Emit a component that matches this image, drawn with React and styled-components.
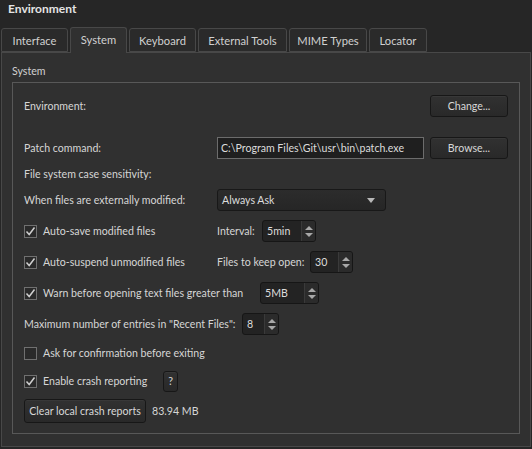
import React from "react";
import styled, { createGlobalStyle } from "styled-components";

const Global = createGlobalStyle`
  html, body { margin: 0; padding: 0; background: #262626; }
  body {
    font-family: Lato, "Open Sans", sans-serif;
    font-size: 10.6px;
    color: #d6d6d6;
    width: 532px;
    height: 449px;
    overflow: hidden;
  }
  * { box-sizing: border-box; }
`;

const Page = styled.div`
  display: flex;
  flex-direction: column;
  height: 449px;
`;

const Title = styled.div`
  height: 26px;
  padding: 1px 0 0 8px;
  font-weight: bold;
  font-size: 12px;
  color: #e4e4e4;
`;

const TabBar = styled.div`
  display: flex;
  align-items: flex-end;
  gap: 2px;
  padding-left: 1px;
  height: 26px;
  position: relative;
  z-index: 1;
`;

const Tab = styled.div`
  height: ${(p) => (p.$active ? 26 : 24)}px;
  width: ${(p) => p.$w}px;
  display: flex;
  align-items: center;
  justify-content: center;
  padding-bottom: ${(p) => (p.$active ? 3 : 0)}px;
  border: 1px solid #484848;
  border-bottom: ${(p) => (p.$active ? "none" : "1px solid #484848")};
  border-radius: 3px 3px 0 0;
  background: ${(p) => (p.$active ? "#303030" : "#2a2a2a")};
  color: #d0d0d0;
  font-size: 11.2px;
  margin-bottom: ${(p) => (p.$active ? -1 : 0)}px;
`;

const Pane = styled.div`
  flex: 1;
  margin: 0 1px 2px 1px;
  background: #303030;
  border: 1px solid #484848;
  padding: 10px 10px 12px 10px;
  display: flex;
  flex-direction: column;
`;

const GroupTitle = styled.div`
  height: 19px;
  padding-top: 2px;
  color: #d0d0d0;
`;

const Group = styled.div`
  flex: 1;
  border: 1px solid #585858;
  padding: 12px 11px 0 11px;
  display: flex;
  flex-direction: column;
`;

const Row = styled.div`
  display: flex;
  align-items: center;
  height: ${(p) => p.$h || 22}px;
  margin-top: ${(p) => p.$mt || 0}px;
`;

const Label = styled.span`
  width: ${(p) => (p.$w ? `${p.$w}px` : "auto")};
  flex: none;
  white-space: nowrap;
  margin-left: ${(p) => p.$ml || 0}px;
  margin-right: ${(p) => p.$mr || 0}px;
`;

const Button = styled.div`
  width: ${(p) => p.$w}px;
  height: ${(p) => p.$h || 22}px;
  margin-left: ${(p) => (p.$right ? "auto" : `${p.$ml || 0}px`)};
  display: flex;
  align-items: center;
  justify-content: center;
  background: linear-gradient(#313131, #292929);
  border: 1px solid #171717;
  border-radius: 3px;
  box-shadow: inset 0 1px 0 #383838;
  color: #d8d8d8;
  white-space: nowrap;
`;

const TextInput = styled.div`
  width: 207px;
  height: 22px;
  display: flex;
  align-items: center;
  padding-left: 3px;
  background: #1f1f1f;
  border: 1px solid #6c6c6c;
  color: #dcdcdc;
  white-space: nowrap;
  overflow: hidden;
`;

const Combo = styled.div`
  width: 169px;
  height: 22px;
  display: flex;
  align-items: center;
  justify-content: space-between;
  padding: 0 10px 0 4px;
  background: linear-gradient(#2c2c2c, #262626);
  border: 1px solid #181818;
  border-radius: 3px;
  color: #dcdcdc;
`;

const Arrow = styled.span`
  width: 0;
  height: 0;
  border-left: 4px solid transparent;
  border-right: 4px solid transparent;
  border-top: 5px solid #b8b8b8;
`;

const Spin = styled.div`
  width: ${(p) => p.$w}px;
  height: 22px;
  display: flex;
  background: #232323;
  border: 1px solid #161616;
  border-radius: 3px;
  overflow: hidden;
`;

const SpinText = styled.div`
  flex: 1;
  display: flex;
  align-items: center;
  padding-left: 4px;
  color: #dcdcdc;
`;

const SpinArrows = styled.div`
  width: 14px;
  display: flex;
  flex-direction: column;
  align-items: center;
  justify-content: center;
  gap: 3px;
  background: #2b2b2b;
  border-left: 1px solid #3a3a3a;
`;

const Up = styled.span`
  width: 0;
  height: 0;
  border-left: 4px solid transparent;
  border-right: 4px solid transparent;
  border-bottom: 4px solid #a8a8a8;
`;
const Down = styled.span`
  width: 0;
  height: 0;
  border-left: 4px solid transparent;
  border-right: 4px solid transparent;
  border-top: 4px solid #a8a8a8;
`;

const CheckWrap = styled.label`
  display: flex;
  align-items: center;
  gap: 6px;
  width: ${(p) => (p.$w ? `${p.$w}px` : "auto")};
  flex: none;
  white-space: nowrap;
`;

const Box = styled.span`
  width: 13px;
  height: 13px;
  border: 1px solid #707070;
  background: #2a2a2a;
  display: flex;
  align-items: center;
  justify-content: center;
`;

const Check = ({ checked, children, w }) => (
  <CheckWrap $w={w}>
    <Box>
      {checked && (
        <svg width="11" height="11" viewBox="0 0 11 11">
          <path d="M1.5 5.5 L4.2 8.5 L9.5 1.5" fill="none" stroke="#d0d0d0" strokeWidth="1.5" />
        </svg>
      )}
    </Box>
    {children}
  </CheckWrap>
);

const SpinBox = ({ value, w }) => (
  <Spin $w={w}>
    <SpinText>{value}</SpinText>
    <SpinArrows>
      <Up />
      <Down />
    </SpinArrows>
  </Spin>
);

const tabs = [
  ["Interface", 67],
  ["System", 57],
  ["Keyboard", 67],
  ["External Tools", 89],
  ["MIME Types", 78],
  ["Locator", 58],
];

export default function App() {
  return (
    <Page>
      <Global />
      <Title>Environment</Title>
      <TabBar>
        {tabs.map(([t, w]) => (
          <Tab key={t} $w={w} $active={t === "System"}>
            {t}
          </Tab>
        ))}
      </TabBar>
      <Pane>
        <GroupTitle>System</GroupTitle>
        <Group>
          <Row>
            <Label>Environment:</Label>
            <Button $w={78} $right>Change...</Button>
          </Row>
          <Row $mt={20}>
            <Label $w={193}>Patch command:</Label>
            <TextInput>C:\Program Files\Git\usr\bin\patch.exe</TextInput>
            <Button $w={78} $right>Browse...</Button>
          </Row>
          <Row $mt={4}>
            <Label>File system case sensitivity:</Label>
          </Row>
          <Row $mt={4}>
            <Label $w={193}>When files are externally modified:</Label>
            <Combo>
              Always Ask
              <Arrow />
            </Combo>
          </Row>
          <Row $mt={9}>
            <Check checked w={193}>Auto-save modified files</Check>
            <Label $w={45}>Interval:</Label>
            <SpinBox value="5min" w={54} />
          </Row>
          <Row $mt={9}>
            <Check checked w={193}>Auto-suspend unmodified files</Check>
            <Label $w={93}>Files to keep open:</Label>
            <SpinBox value="30" w={43} />
          </Row>
          <Row $mt={9}>
            <Check checked w={236}>Warn before opening text files greater than</Check>
            <SpinBox value="5MB" w={59} />
          </Row>
          <Row $mt={9}>
            <Label $w={218}>Maximum number of entries in "Recent Files":</Label>
            <SpinBox value="8" w={37} />
          </Row>
          <Row $mt={7}>
            <Check>Ask for confirmation before exiting</Check>
          </Row>
          <Row $mt={6}>
            <Check checked w={139}>Enable crash reporting</Check>
            <Button $w={15} $h={21}>?</Button>
          </Row>
          <Row $mt={7} $h={24}>
            <Button $w={122} $h={24}>Clear local crash reports</Button>
            <Label $ml={6}>83.94 MB</Label>
          </Row>
        </Group>
      </Pane>
    </Page>
  );
}
